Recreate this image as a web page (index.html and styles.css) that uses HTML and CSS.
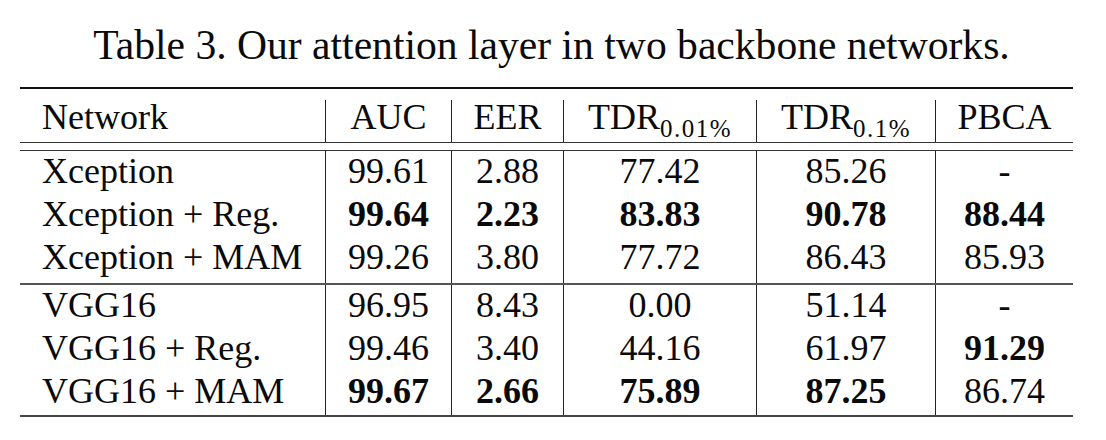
FILE: index.html
```html
<!DOCTYPE html>
<html>
<head>
<meta charset="utf-8">
<link rel="stylesheet" href="styles.css">
</head>
<body>
<div class="page">
  <div class="caption">Table 3. Our attention layer in two backbone networks.</div>
  <div class="table">
    <div class="grid head">
      <div class="c first">Network</div>
      <div class="c">AUC</div>
      <div class="c">EER</div>
      <div class="c">TDR<span class="sub">0.01%</span></div>
      <div class="c">TDR<span class="sub">0.1%</span></div>
      <div class="c">PBCA</div>
    </div>
    <div class="grid body">
      <div class="c first">Xception</div>
      <div class="c">99.61</div>
      <div class="c">2.88</div>
      <div class="c">77.42</div>
      <div class="c">85.26</div>
      <div class="c">-</div>

      <div class="c first">Xception + Reg.</div>
      <div class="c"><b>99.64</b></div>
      <div class="c"><b>2.23</b></div>
      <div class="c"><b>83.83</b></div>
      <div class="c"><b>90.78</b></div>
      <div class="c"><b>88.44</b></div>

      <div class="c first">Xception + MAM</div>
      <div class="c">99.26</div>
      <div class="c">3.80</div>
      <div class="c">77.72</div>
      <div class="c">86.43</div>
      <div class="c">85.93</div>
    </div>
    <div class="grid body second">
      <div class="c first">VGG16</div>
      <div class="c">96.95</div>
      <div class="c">8.43</div>
      <div class="c">0.00</div>
      <div class="c">51.14</div>
      <div class="c">-</div>

      <div class="c first">VGG16 + Reg.</div>
      <div class="c">99.46</div>
      <div class="c">3.40</div>
      <div class="c">44.16</div>
      <div class="c">61.97</div>
      <div class="c"><b>91.29</b></div>

      <div class="c first">VGG16 + MAM</div>
      <div class="c"><b>99.67</b></div>
      <div class="c"><b>2.66</b></div>
      <div class="c"><b>75.89</b></div>
      <div class="c"><b>87.25</b></div>
      <div class="c">86.74</div>
    </div>
  </div>
</div>
</body>
</html>
```

FILE: styles.css
```css
html, body {
  margin: 0;
  padding: 0;
  background: #fff;
}

.page {
  width: 1106px;
  height: 440px;
  font-family: "Liberation Serif", "Times New Roman", serif;
  color: #0a0a0a;
  padding-top: 22px;
  box-sizing: border-box;
}

.caption {
  font-size: 41.6px;
  line-height: 46px;
  text-align: center;
  padding-right: 3px;
}

.table {
  margin: 19px 0 0 20px;
  width: 1053px;
  border-top: 2px solid #111;
  border-bottom: 2px solid #444;
  padding-top: 11px;
  font-size: 36px;
}

.grid {
  display: grid;
  grid-template-columns: 305px 126px 112px 193px 179px 138px;
}

.c {
  text-align: center;
  white-space: nowrap;
  box-sizing: border-box;
  border-left: 1px solid #222;
}

.c.first {
  text-align: left;
  padding-left: 22px;
  border-left: none;
}

.head {
  grid-template-rows: 42px;
  line-height: 34px;
  border-bottom: 1px solid #333;
}

.body {
  grid-template-rows: 43px 43px 46px;
  line-height: 40px;
  border-top: 1px solid #333;
}

.head + .body {
  margin-top: 7px;
}

.body.second {
  grid-template-rows: 43px 43px 44px;
  border-top: 2px solid #555;
}

.sub {
  font-size: 25px;
  line-height: 0;
  vertical-align: -8px;
  letter-spacing: 1.5px;
}

b {
  font-weight: bold;
}
```
